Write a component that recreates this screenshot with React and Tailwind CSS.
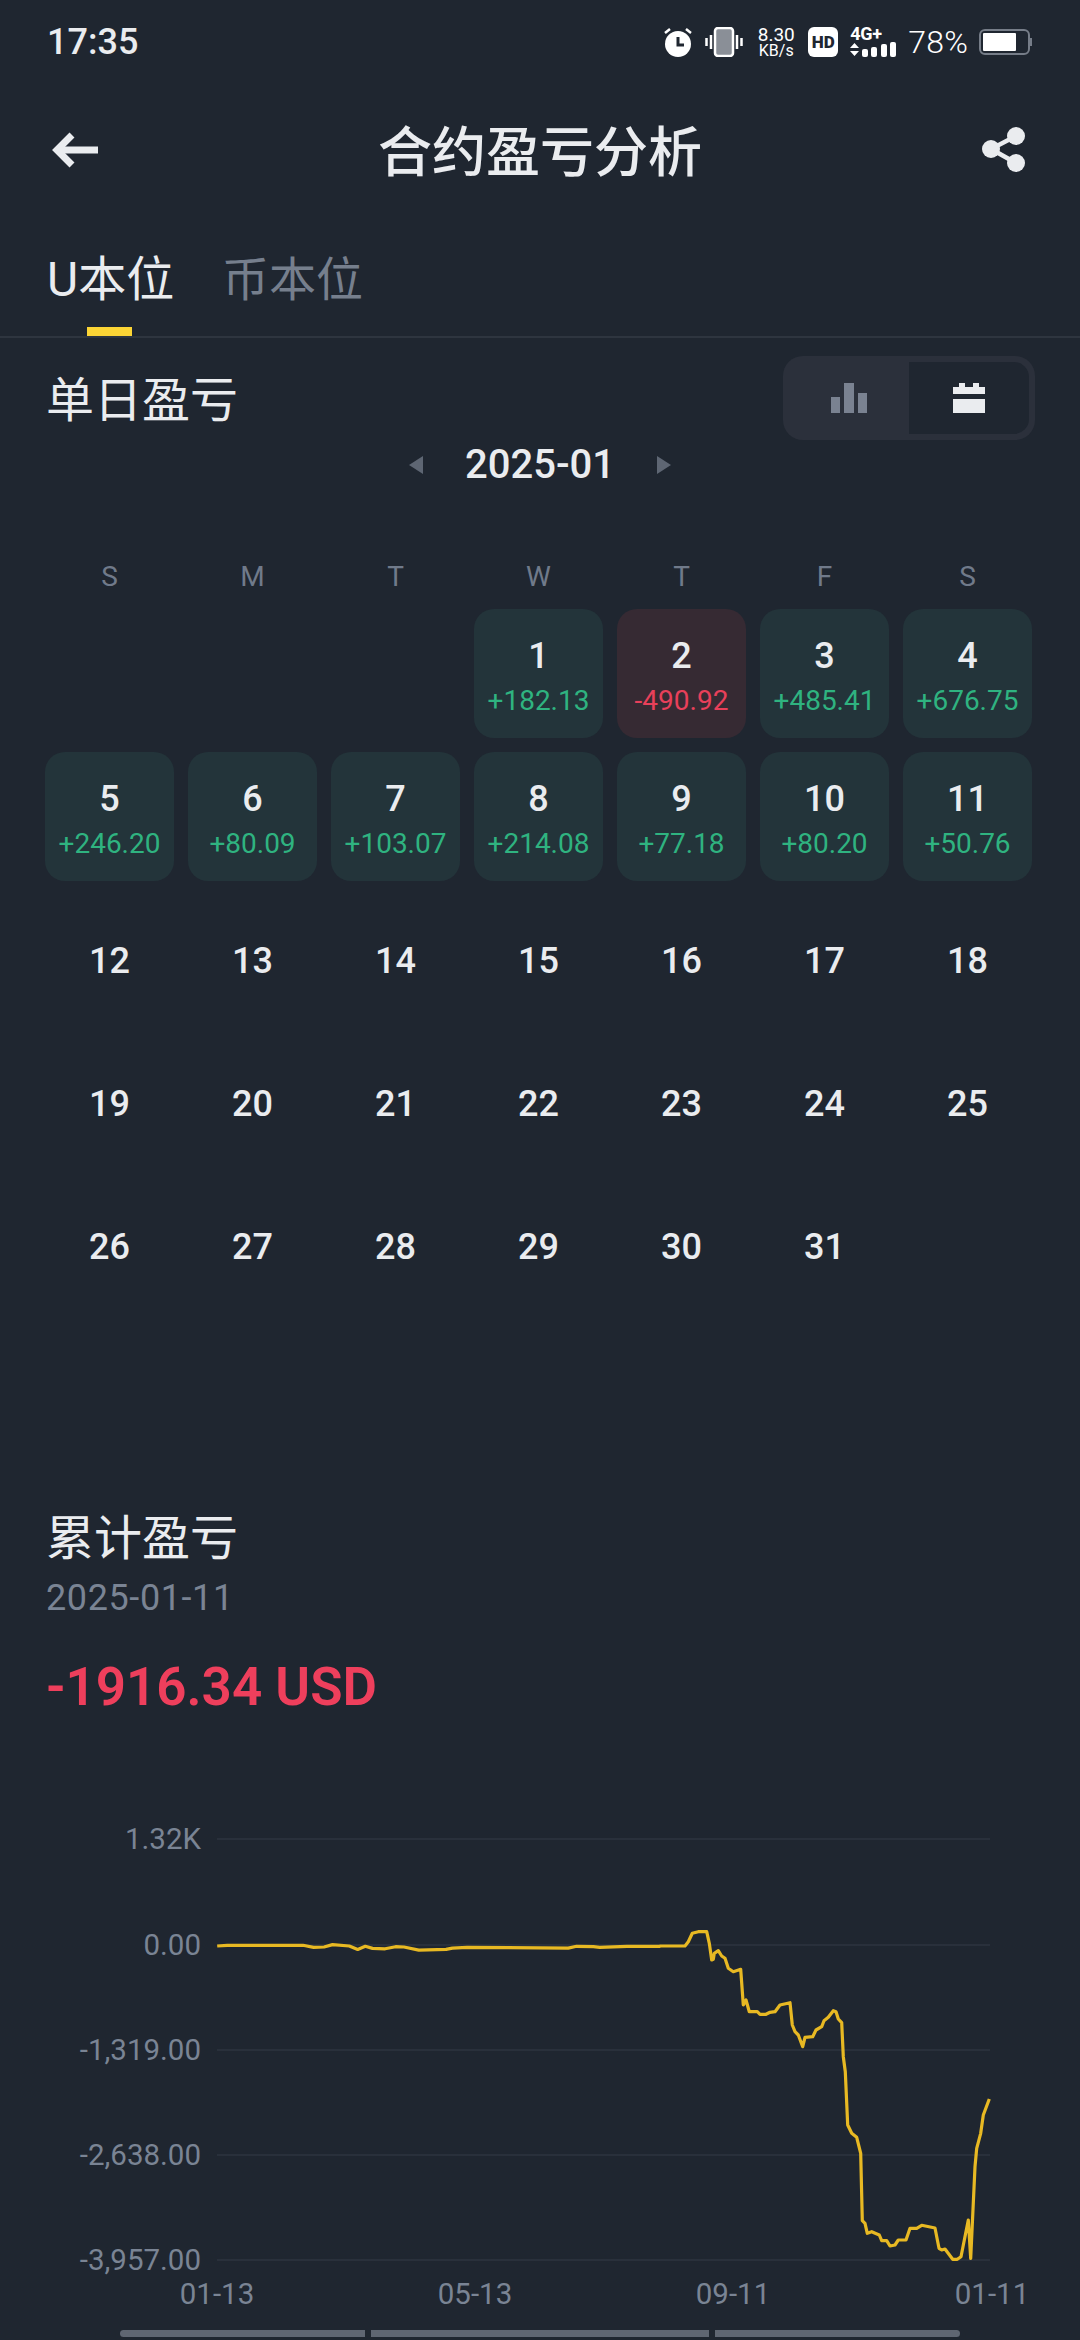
const right = [[0,138],[75,138],[85,125],[97,100],[115,95],[140,95],[148,130],[155,180],[160,178],[163,160],[175,152],[185,168],[195,175],[205,205],[220,215],[242,208],[250,315],[258,300],[268,335],[292,335],[300,343],[318,343],[330,337],[345,335],[360,315],[390,308],[397,375],[405,395],[415,405],[428,440],[435,412],[458,410],[468,390],[485,380],[492,362],[505,352],[520,332],[528,335],[535,357],[545,368],[550,470],[556,515],[563,675],[575,700],[590,712],[602,760],[607,962],[615,970],[622,1000],[635,995],[658,1005],[665,1022],[680,1022],[690,1038],[705,1035],[715,1020],[738,1020],[750,985],[770,985],[785,976],[825,984],[837,1045],[845,1050],[855,1047],[878,1078],[892,1078],[903,1070],[925,960],[932,1075],[945,800],[950,745],[962,700],[970,645],[988,597]];
const left = [[516,424],[540,422],[720,422],[745,428],[770,427],[790,420],[830,424],[850,434],[868,425],[885,431],[915,432],[940,426],[960,427],[995,436],[1060,434],[1075,430],[1110,428],[1350,430],[1370,425],[1410,426],[1425,428],[1490,425],[1568,425]];

const linePoints = [
  ...left.map(([x, y]) => `${(x / 2.376).toFixed(1)},${(y / 2.904 + 1800).toFixed(1)}`),
  ...right.map(([x, y]) => `${(x / 3 + 660).toFixed(1)},${(y / 3 + 1900).toFixed(1)}`),
].join(" ");

const weekdays = ["S", "M", "T", "W", "T", "F", "S"];
const pnl = {
  1: "+182.13", 2: "-490.92", 3: "+485.41", 4: "+676.75", 5: "+246.20", 6: "+80.09",
  7: "+103.07", 8: "+214.08", 9: "+77.18", 10: "+80.20", 11: "+50.76",
};
const days = Array.from({ length: 31 }, (_, i) => i + 1);

function StatusBar() {
  return (
    <div className="h-[84px] flex items-center justify-between pl-[47px] pr-[48px] shrink-0">
      <span className="text-[36px] font-medium text-[#eaecef] leading-none">17:35</span>
      <div className="flex items-center h-[30px] text-white">
        {/* alarm */}
        <svg width="30" height="30" viewBox="0 0 30 30" fill="none">
          <circle cx="15" cy="17" r="13" fill="#fff" />
          <path d="M15 10v8h6" stroke="#1f2630" strokeWidth="3" />
          <path d="M2 6l5-4M28 6l-5-4" stroke="#fff" strokeWidth="2.500" />
        </svg>
        {/* vibrate */}
        <svg className="ml-[12px]" width="38" height="30" viewBox="0 0 38 30" fill="none">
          <rect x="10" y="1" width="18" height="28" rx="3" fill="#8a8f97" stroke="#fff" strokeWidth="2.500" />
          <path d="M1.500 11v8M6 8v14M32 8v14M36.500 11v8" stroke="#fff" strokeWidth="2.500" />
        </svg>
        <div className="ml-[14px] w-[38px] flex flex-col items-center">
          <span className="text-[19px] leading-[18px]">8.30</span>
          <span className="text-[16px] leading-[14px]">KB/s</span>
        </div>
        <div className="ml-[13px] w-[30px] h-[30px] rounded-[6px] bg-white flex items-center justify-center text-[#1f2630] text-[17px] font-black leading-none">
          HD
        </div>
        <div className="ml-[12px] w-[47px] h-[30px] flex flex-col">
          <span className="text-[18px] font-bold leading-[14px] tracking-[-0.3px] h-[15px]">4G+</span>
          <svg width="47" height="15" viewBox="0 0 47 15" fill="#fff">
            <path d="M0 6l4.500-5 4.500 5zM0 9l4.500 5 4.500-5z" />
            <rect x="12" y="7" width="6" height="8" rx="2" />
            <rect x="21" y="5" width="6" height="10" rx="2" />
            <rect x="31" y="2" width="6" height="13" rx="2" />
            <rect x="40" y="0" width="6" height="15" rx="2" />
          </svg>
        </div>
        <span className="ml-[11px] text-[32px] font-light leading-none tracking-[0.2px]">78%</span>
        {/* battery */}
        <div className="ml-[11px] flex items-center">
          <div className="w-[51px] h-[26px] rounded-[6px] border-2 border-[#767d88] p-[2px]">
            <div className="w-[33px] h-[18px] bg-white rounded-[1px]" />
          </div>
          <div className="w-[2px] h-[8px] bg-[#767d88]" />
        </div>
      </div>
    </div>
  );
}

function Header() {
  return (
    <div className="h-[136px] flex items-center justify-between pl-[52px] pr-[54px] shrink-0">
      <svg width="46" height="40" viewBox="0 0 46 40" fill="none" stroke="#eaecef" strokeWidth="7">
        <path d="M46 18H6" />
        <path d="M20 3L5 18l15 15" />
      </svg>
      <h1 className="mt-[3px] text-[54px] font-medium text-[#eaecef] leading-none">合约盈亏分析</h1>
      <svg width="44" height="50" viewBox="0 0 44 50" fill="#eaecef">
        <circle cx="34" cy="9" r="9" />
        <circle cx="9" cy="22" r="9" />
        <circle cx="34" cy="36" r="9" />
        <path d="M34 9L9 22l25 14" fill="none" stroke="#eaecef" strokeWidth="4.500" />
      </svg>
    </div>
  );
}

function Tabs() {
  return (
    <div className="h-[118px] border-b-2 border-[#2e353f] pl-[47px] flex gap-[47px] shrink-0">
      <div className="relative h-full w-[128px]">
        <span className="block mt-[30px] text-[48px] text-[#eaecef] leading-[60px]">U本位</span>
        <div className="absolute left-[40px] bottom-0 w-[45px] h-[9px] bg-[#fcd535]" />
      </div>
      <span className="mt-[30px] text-[47px] text-[#767f8d] leading-[60px] h-[60px]">币本位</span>
    </div>
  );
}

function DailySection() {
  return (
    <>
      <div className="mt-[18px] pl-[46px] pr-[45px] flex justify-between items-center shrink-0">
        <h2 className="text-[48px] text-[#eaecef] leading-[60px] mt-[6px]">单日盈亏</h2>
        <div className="w-[252px] h-[84px] rounded-[20px] bg-[#2b303b] flex py-[6px] pr-[6px]">
          <div className="w-[126px] pl-[6px] flex items-center justify-center">
            <svg width="36" height="30" viewBox="0 0 36 30" fill="#7a8291">
              <rect x="0" y="14" width="9" height="16" />
              <rect x="13" y="0" width="10" height="30" />
              <rect x="27" y="10" width="9" height="20" />
            </svg>
          </div>
          <div className="flex-1 bg-[#1f2630] rounded-r-[15px] flex items-center justify-center">
            <svg width="32" height="30" viewBox="0 0 32 30" fill="#eaecef">
              <path d="M0 4h6V0h6v4h8V0h6v4h6v7H0z" />
              <rect x="0" y="16" width="32" height="14" />
            </svg>
          </div>
        </div>
      </div>

      <div className="h-[50px] flex items-center justify-center shrink-0">
        <svg width="14" height="18" viewBox="0 0 14 18" fill="#5e6673"><path d="M14 0v18L0 9z" /></svg>
        <span className="mx-[42px] text-[40px] font-medium text-[#eaecef] leading-none">2025-01</span>
        <svg width="14" height="18" viewBox="0 0 14 18" fill="#5e6673"><path d="M0 0v18l14-9z" /></svg>
      </div>

      <div className="mt-[67px] ml-[45px] grid grid-cols-[repeat(7,129px)] gap-x-[14px] shrink-0">
        {weekdays.map((d, i) => (
          <div key={i} className="h-[40px] text-center text-[28px] leading-[40px] text-[#707a8a]">{d}</div>
        ))}
      </div>

      <div className="mt-[12px] ml-[45px] grid grid-cols-[repeat(7,129px)] auto-rows-[129px] gap-[14px] shrink-0">
        {days.map((d) => {
          const val = pnl[d];
          const neg = val && val[0] === "-";
          return (
            <div
              key={d}
              className={`flex flex-col items-center rounded-[20px] ${d === 1 ? "col-start-4" : ""} ${val ? (neg ? "bg-[#362a33]" : "bg-[#23343a]") : "justify-center pt-[3px]"}`}
            >
              <span className={`text-[36px] font-medium text-[#eaecef] leading-[44px] ${val ? "mt-[25px]" : ""}`}>{d}</span>
              {val && (
                <span className={`text-[28px] leading-[36px] mt-[5px] ${neg ? "text-[#e8405a]" : "text-[#2fb380]"}`}>{val}</span>
              )}
            </div>
          );
        })}
      </div>
    </>
  );
}

function Chart() {
  const yLabels = [["1.32K", 1839], ["0.00", 1945], ["-1,319.00", 2050], ["-2,638.00", 2155], ["-3,957.00", 2260]];
  const xLabels = [["01-13", 217], ["05-13", 475], ["09-11", 733], ["01-11", 992]];
  return (
    <svg className="mt-[98px] shrink-0 block" width="1080" height="500" viewBox="0 1820 1080 500">
      {yLabels.map(([t, y]) => (
        <g key={t}>
          <line x1="217" x2="990" y1={y} y2={y} stroke="#2e353f" strokeWidth="1.500" />
          <text x="201" y={y + 10} textAnchor="end" fontSize="29.500" fill="#7a8494">{t}</text>
        </g>
      ))}
      {xLabels.map(([t, x]) => (
        <text key={t} x={x} y="2304" textAnchor="middle" fontSize="29.500" fill="#7a8494">{t}</text>
      ))}
      <polyline points={linePoints} fill="none" stroke="#e8b923" strokeWidth="3.200" strokeLinejoin="round" />
    </svg>
  );
}

export default function App() {
  return (
    <div className="w-[1080px] h-[2340px] bg-[#1f2630] overflow-hidden flex flex-col font-['Roboto','Noto_Sans_CJK_SC',sans-serif]">
      <StatusBar />
      <Header />
      <Tabs />
      <DailySection />

      <h2 className="mt-[199px] pl-[46px] text-[48px] text-[#eaecef] leading-[60px] shrink-0">累计盈亏</h2>
      <div className="mt-[7px] pl-[46px] text-[36px] tracking-[0.6px] text-[#7a8494] leading-[44px] shrink-0">2025-01-11</div>
      <div className="mt-[32px] pl-[46px] text-[53px] font-semibold text-[#ee3f5c] leading-[70px] shrink-0">-1916.34 USD</div>

      <Chart />

      {/* scrollbar */}
      <div className="mt-[10px] ml-[120px] flex gap-[6px] shrink-0">
        <div className="w-[245px] h-[7px] bg-[#5f6672] rounded-l-full" />
        <div className="w-[338px] h-[7px] bg-[#5f6672]" />
        <div className="w-[245px] h-[7px] bg-[#5f6672] rounded-r-full" />
      </div>
    </div>
  );
}
